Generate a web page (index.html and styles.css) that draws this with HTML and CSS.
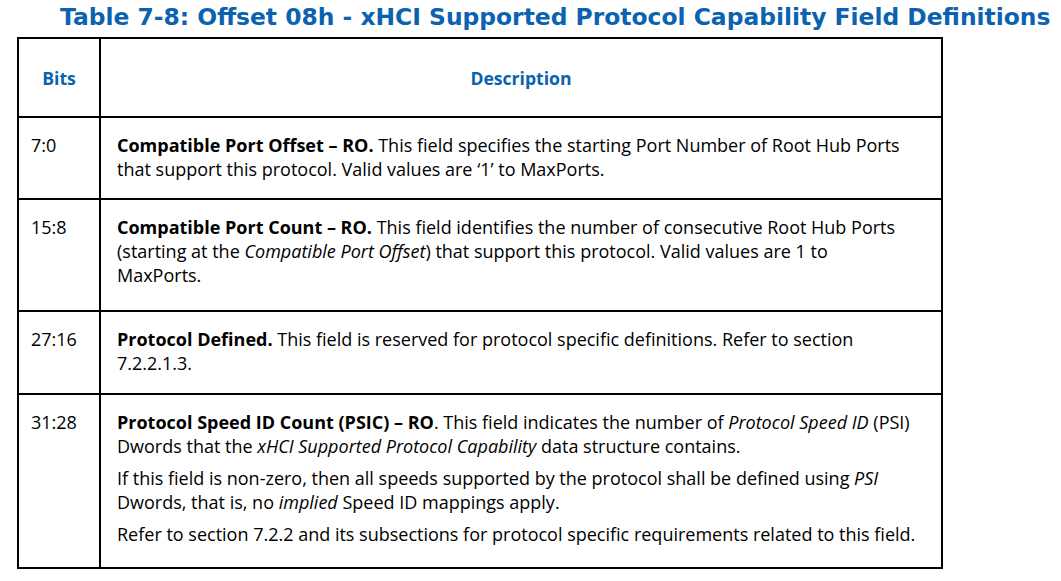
FILE: index.html
```html
<!DOCTYPE html>
<html>
<head>
<meta charset="utf-8">
<link rel="stylesheet" href="styles.css">
</head>
<body>
<h1 class="title">Table 7-8: Offset 08h - xHCI Supported Protocol Capability Field Definitions</h1>
<table class="fields">
  <thead>
    <tr class="head-row">
      <th class="col-bits">Bits</th>
      <th class="col-desc">Description</th>
    </tr>
  </thead>
  <tbody>
    <tr class="row r1">
      <td class="bits">7:0</td>
      <td class="desc"><p><b>Compatible Port Offset – RO.</b> This field specifies the starting Port Number of Root Hub Ports that support this protocol. Valid values are ‘1’ to MaxPorts.</p></td>
    </tr>
    <tr class="row r2">
      <td class="bits">15:8</td>
      <td class="desc"><p><b>Compatible Port Count – RO.</b> This field identifies the number of consecutive Root Hub Ports (starting at the <i>Compatible Port Offset</i>) that support this protocol. Valid values are 1 to<br>MaxPorts.</p></td>
    </tr>
    <tr class="row r3">
      <td class="bits">27:16</td>
      <td class="desc"><p><b>Protocol Defined.</b> This field is reserved for protocol specific definitions. Refer to section 7.2.2.1.3.</p></td>
    </tr>
    <tr class="row r4">
      <td class="bits">31:28</td>
      <td class="desc">
        <p><b>Protocol Speed ID Count (PSIC) – RO</b>. This field indicates the number of <i>Protocol Speed ID</i> (PSI) Dwords that the <i>xHCI Supported Protocol Capability</i> data structure contains.</p>
        <p>If this field is non-zero, then all speeds supported by the protocol shall be defined using <i>PSI</i> Dwords, that is, no <i>implied</i> Speed ID mappings apply.</p>
        <p>Refer to section 7.2.2 and its subsections for protocol specific requirements related to this field.</p>
      </td>
    </tr>
  </tbody>
</table>
</body>
</html>
```

FILE: styles.css
```css
html, body {
  margin: 0;
  padding: 0;
  background: #ffffff;
}

body {
  padding: 0 0 0 17px;
  font-family: "Open Sans", "Noto Sans", sans-serif;
  color: #000;
}

.title {
  margin: 0;
  padding: 3px 0 0 43px;
  font-family: "DejaVu Sans", Verdana, sans-serif;
  font-weight: bold;
  font-size: 23.4px;
  line-height: 28px;
  color: #0b62b0;
  white-space: nowrap;
  height: 34px;
}

.fields {
  border-collapse: collapse;
  width: 926px;
  border: 2px solid #000;
}

.fields th,
.fields td {
  border: 2px solid #000;
  vertical-align: top;
  text-align: left;
}

.fields th {
  font-family: "Open Sans", "Noto Sans", sans-serif;
  font-weight: bold;
  font-size: 17.6px;
  color: #0b62b0;
  text-align: center;
  vertical-align: middle;
  height: 77px;
  padding: 0;
}

.col-bits {
  width: 80px;
}

.fields td {
  font-size: 18px;
  line-height: 24px;
  padding: 15px 12px 0 12px;
}

.fields td.desc {
  padding-left: 16px;
  padding-right: 12px;
}

.desc p {
  margin: 0 0 8px 0;
}

.r1 td { height: 65px; }
.r2 td { height: 95px; }
.r3 td { height: 66px; }
.r4 td { height: 157px; }
```
